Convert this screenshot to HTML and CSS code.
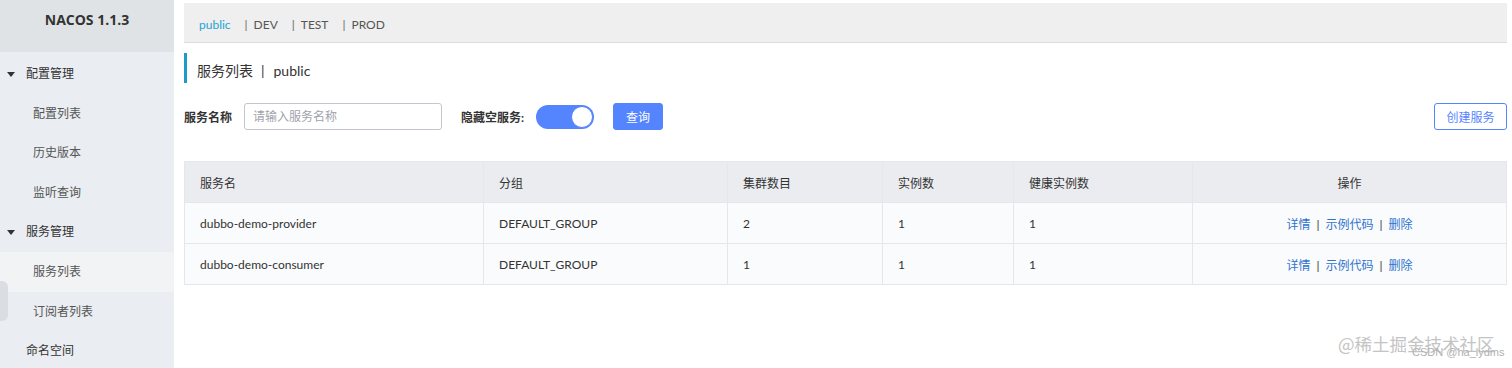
FILE: index.html
```html
<!DOCTYPE html>
<html lang="zh-CN">
  <head>
    <meta charset="UTF-8" />
    <meta name="viewport" content="width=device-width, initial-scale=1.0" />
    <title>Nacos - 服务列表</title>
    <link rel="stylesheet" href="styles.css">
  </head>
  <body>
    <div class="sidebar">
      <div class="logo">NACOS 1.1.3</div>
      <ul class="menu">
        <li class="group"><span class="caret"></span>配置管理</li>
        <li class="sub">配置列表</li>
        <li class="sub">历史版本</li>
        <li class="sub">监听查询</li>
        <li class="group"><span class="caret"></span>服务管理</li>
        <li class="sub active">服务列表</li>
        <li class="sub">订阅者列表</li>
        <li class="top">命名空间</li>
      </ul>
      <div class="handle"></div>
    </div>

    <div class="main">
      <div class="ns-bar">
        <span class="ns current">public</span>
        <span class="ns"><i>|</i>DEV</span>
        <span class="ns"><i>|</i>TEST</span>
        <span class="ns"><i>|</i>PROD</span>
      </div>

      <div class="page-title">服务列表<i>|</i>public</div>

      <div class="search">
        <label class="lbl">服务名称</label>
        <input class="txt" type="text" placeholder="请输入服务名称" />
        <label class="lbl lbl-hide">隐藏空服务:</label>
        <span class="switch"><span class="knob"></span></span>
        <button class="btn primary">查询</button>
        <button class="btn outline">创建服务</button>
      </div>

      <table class="grid">
        <colgroup>
          <col style="width: 299px" />
          <col style="width: 244px" />
          <col style="width: 155px" />
          <col style="width: 131px" />
          <col style="width: 179px" />
          <col />
        </colgroup>
        <thead>
          <tr>
            <th>服务名</th>
            <th>分组</th>
            <th>集群数目</th>
            <th>实例数</th>
            <th>健康实例数</th>
            <th class="center">操作</th>
          </tr>
        </thead>
        <tbody>
          <tr>
            <td>dubbo-demo-provider</td>
            <td>DEFAULT_GROUP</td>
            <td>2</td>
            <td>1</td>
            <td>1</td>
            <td class="center ops"><a>详情</a><i>|</i><a>示例代码</a><i>|</i><a>删除</a></td>
          </tr>
          <tr>
            <td>dubbo-demo-consumer</td>
            <td>DEFAULT_GROUP</td>
            <td>1</td>
            <td>1</td>
            <td>1</td>
            <td class="center ops"><a>详情</a><i>|</i><a>示例代码</a><i>|</i><a>删除</a></td>
          </tr>
        </tbody>
      </table>
    </div>

    <div class="watermark">
      <div class="wm-big">@稀土掘金技术社区</div>
      <div class="wm-small">CSDN @ha_lydms</div>
    </div>
  </body>
</html>
```

FILE: styles.css
```css
* {
  box-sizing: border-box;
}
body {
  margin: 0;
  display: flex;
  height: 368px;
  overflow: hidden;
  font-family: Lato, "Noto Sans CJK SC", sans-serif;
  font-size: 12px;
  color: #333;
  background: #fff;
}
i {
  font-style: normal;
}

/* Sidebar */
.sidebar {
  position: relative;
  width: 174px;
  flex: none;
  background: #eaedf1;
}
.logo {
  height: 52px;
  line-height: 40px;
  text-align: center;
  background: #dfe3e6;
  font-family: "Open Sans", sans-serif;
  font-weight: bold;
  font-size: 14px;
  color: #333;
}
.menu {
  list-style: none;
  margin: 2px 0 0;
  padding: 0;
}
.menu li {
  height: 39.6px;
  line-height: 40.6px;
  color: #333;
  white-space: nowrap;
}
.menu .group,
.menu .top {
  padding-left: 26px;
  position: relative;
}
.menu .sub {
  padding-left: 33px;
  color: #555;
}
.menu .active {
  background: #f2f3f5;
}
.caret {
  position: absolute;
  left: 7px;
  top: 18px;
  width: 0;
  height: 0;
  border-left: 4.5px solid transparent;
  border-right: 4.5px solid transparent;
  border-top: 5px solid #333;
}
.handle {
  position: absolute;
  left: 0;
  top: 281px;
  width: 8px;
  height: 40px;
  background: #dadee3;
  border-radius: 0 6px 6px 0;
}

/* Main */
.main {
  flex: 1;
  padding: 3px 5px 0 10px;
}
.ns-bar {
  height: 40px;
  display: flex;
  align-items: center;
  padding: 3px 0 0 15px;
  background: #efefef;
  border-bottom: 1px solid #dcdcdc;
  color: #555;
}
.ns {
  margin-right: 14px;
}
.ns i {
  margin-right: 6px;
  color: #666;
}
.ns.current {
  color: #23a5d3;
}
.page-title {
  margin-top: 10px;
  height: 30px;
  line-height: 26px;
  padding-top: 5px;
  border-left: 3px solid #1d9ac6;
  padding-left: 10px;
  font-size: 14px;
  color: #333;
}
.page-title i {
  margin: 0 9px 0 8px;
  color: #333;
}

.search {
  margin-top: 20px;
  height: 27px;
  display: flex;
  align-items: center;
}
.lbl {
  font-weight: bold;
  color: #333;
}
.txt {
  margin-left: 12px;
  width: 198px;
  height: 27px;
  border: 1px solid #c4c6cf;
  border-radius: 3px;
  padding: 0 8px;
  font-family: inherit;
  font-size: 12px;
  color: #333;
  outline: none;
}
.txt::placeholder {
  color: #a0a2ad;
}
.lbl-hide {
  margin-left: 19px;
}
.switch {
  margin-left: 12px;
  width: 58px;
  height: 24px;
  border-radius: 12px;
  background: #5584ff;
  display: flex;
  justify-content: flex-end;
  align-items: center;
  padding-right: 1px;
}
.knob {
  width: 22px;
  height: 22px;
  border-radius: 50%;
  background: #fff;
  border: 1px solid #5584ff;
}
.btn {
  height: 27px;
  border-radius: 3px;
  font-family: inherit;
  font-size: 12px;
  cursor: pointer;
}
.primary {
  margin-left: 19px;
  width: 50px;
  background: #5584ff;
  border: 1px solid #5584ff;
  color: #fff;
}
.outline {
  margin-left: auto;
  width: 73px;
  background: #fff;
  border: 1px solid #5584ff;
  color: #5584ff;
}

/* Table */
.grid {
  margin-top: 31px;
  width: 100%;
  table-layout: fixed;
  border-collapse: collapse;
  border: 1px solid #e6e7eb;
}
.grid th,
.grid td {
  height: 41px;
  padding: 0 15px;
  text-align: left;
  font-weight: normal;
  border: 1px solid #e6e7eb;
  color: #333;
}
.grid th {
  background: #ebecf0;
}
.grid td {
  background: #fafbfc;
}
.grid .center {
  text-align: center;
}
.ops a {
  color: #2f73cf;
}
.ops i {
  margin: 0 6px;
  color: #333;
}

/* Watermark */
.watermark {
  position: absolute;
  left: 1338px;
  top: 332px;
  pointer-events: none;
}
.wm-big {
  font-size: 17.5px;
  line-height: 24px;
  color: #c4c4c4;
  font-family: "Noto Sans CJK SC", sans-serif;
}
.wm-small {
  margin: -10px 0 0 74px;
  font-size: 11px;
  color: #b0b0b0;
  font-family: "Liberation Sans", sans-serif;
}
```
